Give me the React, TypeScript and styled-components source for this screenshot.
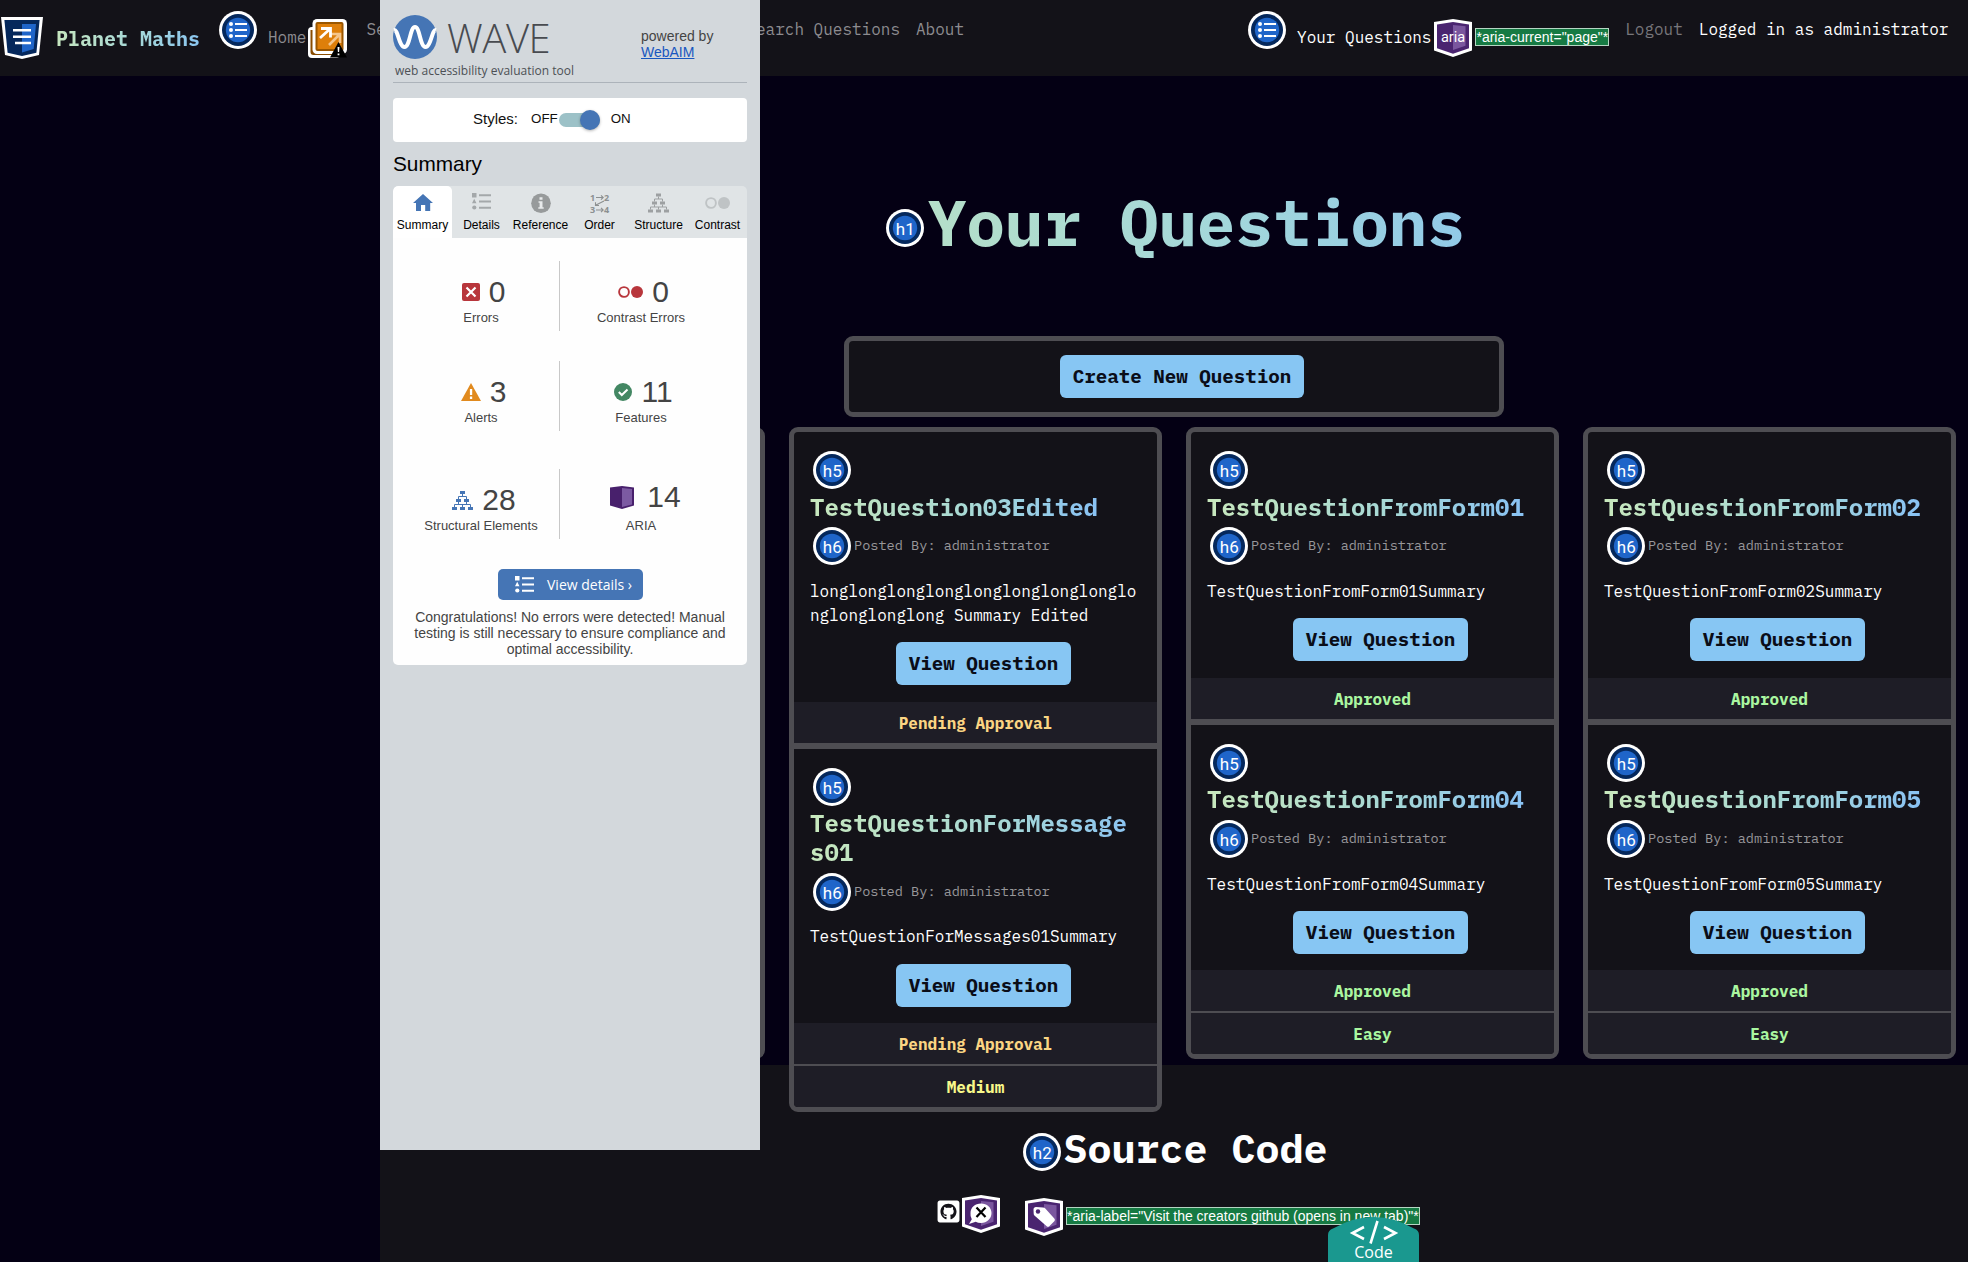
import React from 'react';
import styled, { createGlobalStyle } from 'styled-components';
import { FaGithubSquare } from 'react-icons/fa';

const mono = '"IBM Plex Mono", "Liberation Mono", monospace';
const sans = '"Liberation Sans", Arial, sans-serif';
const open = '"Open Sans", "Noto Sans", sans-serif';
const surface = '#131218';
const line = '#4e4d52';

const Global = createGlobalStyle`
  *, *::before, *::after { box-sizing: border-box; }
  body { margin: 0; background: #040014; font-family: ${mono}; font-size: 16px; line-height: 24px; color: #fff; }
  h1, h2, h5, h6, p { margin: 0; }
  svg { display: block; flex: none; }
`;

const Page = styled.div`
  position: relative;
  width: 1968px;
  height: 1262px;
  overflow: hidden;
`;

/* ---------- site header ---------- */
const Header = styled.header`
  display: flex;
  align-items: flex-start;
  height: 76px;
  padding: 0 19.6px 0 1px;
  background: ${surface};
`;
const Brand = styled.span`
  margin: 27px 19px 0 13px;
  font-size: 20px;
  font-weight: 700;
  background: linear-gradient(90deg, #c6e6bf, #a3d6da 60%, #8ac5f0);
  background-clip: text;
  color: transparent;
`;
const NavText = styled.span<{ $top?: number; $tone?: string; $gap?: number; $width?: number }>`
  margin-top: ${p => p.$top ?? 17}px;
  margin-left: ${p => p.$gap ?? 16}px;
  width: ${p => (p.$width ? `${p.$width}px` : 'auto')};
  color: ${p => p.$tone ?? '#8d8c90'};
  white-space: nowrap;
`;
const IconSlot = styled.span<{ $top: number; $gap?: number }>`
  margin-top: ${p => p.$top}px;
  margin-left: ${p => p.$gap ?? 0}px;
`;
const NavRight = styled.div`
  display: flex;
  align-items: flex-start;
  margin-left: auto;
`;
const AttrTag = styled.span<{ $top?: number; $gap?: number }>`
  height: 18px;
  margin-top: ${p => p.$top ?? 0}px;
  margin-left: ${p => p.$gap ?? 3}px;
  border: 1px solid #b5d6c3;
  background: #167a43;
  color: #fff;
  font: 14px/16px ${sans};
  white-space: nowrap;
`;

/* ---------- main ---------- */
const Main = styled.main`
  height: 989px;
  margin-left: 380px;
  padding: 113px 12px 0;
`;
const TitleRow = styled.div`
  display: flex;
  align-items: center;
  height: 77px;
  padding-left: 494px;
  gap: 4px;
`;
const Title = styled.h1`
  margin-bottom: 10px;
  font-size: 64px;
  line-height: 77px;
  background: linear-gradient(90deg, #b5dfc9, #a5d8d9 50%, #92cae8);
  background-clip: text;
  color: transparent;
`;
const CreateBox = styled.section`
  width: 660px;
  height: 81px;
  margin: 70px auto 10px;
  padding: 14px 0 0 16px;
  display: flex;
  justify-content: center;
  align-items: flex-start;
  border: 5px solid ${line};
  border-radius: 9px;
  background: ${surface};
`;
const Button = styled.button`
  height: 43px;
  padding: 0 12.5px 2px;
  border: 0;
  border-radius: 6px;
  background: #87c6f3;
  color: #0a0d18;
  font: 700 19.2px/41px ${mono};
  white-space: nowrap;
`;
const Columns = styled.div`
  display: grid;
  grid-template-columns: repeat(4, 373px);
  gap: 24px;
  align-items: start;
`;
const Column = styled.div<{ $minHeight?: number }>`
  min-height: ${p => p.$minHeight ?? 0}px;
  border: 5px solid ${line};
  border-radius: 9px;
  background: ${line};
  overflow: hidden;
`;
const Card = styled.article`
  background: ${surface};
  & + & { margin-top: 6px; }
`;
const CardBody = styled.div`
  padding: 19px 16px 16.2px;
`;
const CardTitle = styled.h5`
  width: fit-content;
  margin: 3.7px 0 5.8px;
  font-size: 24px;
  line-height: 28.8px;
  overflow-wrap: anywhere;
  background: linear-gradient(90deg, #c8e8bd, #a6d8d6 58%, #89c2f4);
  background-clip: text;
  color: transparent;
`;
const BadgeSlot = styled.div`
  padding-left: 3px;
`;
const Posted = styled.h6`
  display: flex;
  align-items: center;
  gap: 3px;
  padding-left: 3px;
  font-size: 13.6px;
  font-weight: 400;
  line-height: 20px;
  color: #98979a;
`;
const PostedText = styled.span`
  margin-bottom: 2px;
`;
const Summary = styled.p`
  margin: 13.6px 0 15.6px;
  overflow-wrap: anywhere;
`;
const Action = styled.div`
  display: flex;
  justify-content: center;
  padding-left: 16px;
`;
const Status = styled.div<{ $tone: string }>`
  height: 41px;
  line-height: 42px;
  text-align: center;
  font-weight: 700;
  color: ${p => p.$tone};
  background: #1e1d26;
  & + & { height: 43px; border-top: 2px solid ${line}; }
`;

/* ---------- footer ---------- */
const Footer = styled.footer`
  height: 197px;
  margin-left: 380px;
  padding-top: 63px;
  background: ${surface};
`;
const FooterTitle = styled.h2`
  display: flex;
  justify-content: center;
  align-items: center;
  gap: 3px;
  height: 48px;
  padding-left: 2px;
  font-size: 40px;
  line-height: 48px;
`;
const FooterTitleText = styled.span`
  margin-bottom: 9px;
`;
const FooterLinks = styled.div`
  display: flex;
  align-items: flex-start;
  margin-top: 19px;
  padding-left: 556px;
`;
const CodeTab = styled.div`
  position: absolute;
  left: 1328px;
  top: 1217px;
  width: 91px;
  height: 45px;
`;
const CodeLabel = styled.span`
  position: absolute;
  left: 0;
  right: 0;
  top: 24px;
  text-align: center;
  font: 16px/22px ${open};
`;

/* ---------- evaluation panel ---------- */
const Panel = styled.aside`
  position: absolute;
  left: 380px;
  top: 0;
  width: 380px;
  height: 1150px;
  padding: 15px 13px 0;
  background: #d3d8dc;
  color: #444;
  font-family: ${sans};
`;
const PanelHead = styled.div`
  display: flex;
  height: 68px;
  border-bottom: 1px solid #acb3ba;
`;
const LogoBlock = styled.div`
  width: 248px;
`;
const LogoRow = styled.div`
  display: flex;
  gap: 10px;
  height: 44px;
`;
const Word = styled.span`
  font: 300 40px/45px ${open};
  letter-spacing: -0.4px;
  color: #484b50;
`;
const Tagline = styled.div`
  padding-left: 2px;
  font: 12px/16px ${open};
  white-space: nowrap;
  color: #4c5055;
  margin-top: 4px;
`;
const Powered = styled.div`
  padding-top: 13px;
  font-size: 14px;
  line-height: 16px;
`;
const WebLink = styled.a`
  display: block;
  color: #1857c0;
  text-decoration: underline;
`;
const StylesBox = styled.div`
  display: flex;
  align-items: center;
  height: 44px;
  margin-top: 15px;
  padding: 0 0 2px 80px;
  border-radius: 4px;
  background: #fff;
  color: #111;
  font-size: 15px;
`;
const Small = styled.span<{ $left: number }>`
  margin-left: ${p => p.$left}px;
  font-size: 13.33px;
`;
const Toggle = styled.span`
  display: flex;
  justify-content: flex-end;
  align-items: center;
  width: 41px;
  height: 14px;
  margin: 2px 0 0 1px;
  border-radius: 7px;
  background: #9cc1c7;
`;
const Knob = styled.span`
  width: 20px;
  height: 20px;
  border-radius: 50%;
  background: #4575b5;
  box-shadow: 0 1px 3px rgba(0, 0, 0, 0.3);
`;
const PanelTitle = styled.div`
  margin-top: 9px;
  height: 35px;
  font-size: 20.8px;
  line-height: 26px;
  color: #000;
`;
const Tabs = styled.div`
  display: grid;
  grid-template-columns: repeat(6, 1fr);
  height: 52px;
  border-radius: 5px 5px 0 0;
  background: #e0e4e6;
  overflow: hidden;
`;
const Tab = styled.div<{ $active?: boolean; $tall?: boolean }>`
  display: flex;
  flex-direction: column;
  align-items: center;
  padding-top: 7px;
  border-radius: 5px 5px 0 0;
  background: ${p => (p.$active ? '#fff' : 'transparent')};
  color: #000;
  font-size: 12px;
  line-height: 16px;
  & > svg { margin: ${p => (p.$tall ? '-3px 0 0' : '0 0 4px')}; }
`;
const Results = styled.div`
  height: 427px;
  padding: 23px 8px 0;
  border-radius: 0 0 5px 5px;
  background: #fefefe;
`;
const Pair = styled.div<{ $gap: number }>`
  display: grid;
  grid-template-columns: 159px 162px;
  height: 70px;
  margin-bottom: ${p => p.$gap}px;
`;
const Stat = styled.div<{ $divided?: boolean }>`
  display: flex;
  flex-direction: column;
  align-items: center;
  padding: 14px 0 0 ${p => (p.$divided ? 2 : 0)}px;
  border-right: ${p => (p.$divided ? '1px solid #c8c8c8' : '0')};
  font-size: 13px;
  line-height: 16px;
  white-space: nowrap;
`;
const Count = styled.div<{ $gap?: number; $lift?: number; $shift?: number }>`
  display: flex;
  align-items: center;
  gap: ${p => p.$gap ?? 9}px;
  height: 34px;
  margin-bottom: ${p => 1 + (p.$lift ?? 0)}px;
  margin-top: ${p => -(p.$lift ?? 0)}px;
  padding-left: ${p => p.$shift ?? 0}px;
  font-size: 30px;
`;
const DetailsButton = styled.div`
  display: flex;
  align-items: center;
  gap: 13px;
  width: 145px;
  height: 31px;
  margin: 0 0 9px 97px;
  padding-left: 17px;
  border-radius: 5px;
  background: #4575b5;
  color: #fff;
  font: 14px/30px ${open};
  white-space: nowrap;
`;
const Message = styled.p`
  text-align: center;
  font-size: 14px;
  line-height: 16px;
`;

/* ---------- drawings ---------- */
const Heading = ({ label }: { label: string }) => (
  <svg width="38" height="38" viewBox="0 0 38 38">
    <circle cx="19" cy="19" r="19" fill="#fff" />
    <circle cx="19" cy="19" r="16" fill="#05285c" />
    <circle cx="19" cy="19" r="12.2" fill="#1f65c9" />
    <text x="19.3" y="25.6" textAnchor="middle" fontFamily="Roboto, sans-serif" fontSize="17" fontWeight="400" fill="#fff">{label}</text>
  </svg>
);

const ListBadge = () => (
  <svg width="38" height="38" viewBox="0 0 38 38">
    <circle cx="19" cy="19" r="19" fill="#fff" />
    <circle cx="19" cy="19" r="16" fill="#05285c" />
    <circle cx="19" cy="19" r="12.2" fill="#1f65c9" />
    <g fill="#fff">
      <circle cx="12" cy="13" r="2" /><circle cx="12" cy="19" r="2" /><circle cx="12" cy="25" r="2" />
      <path d="M16 12h12v2H16zM16 18h12v2H16zM16 24h12v2H16z" />
    </g>
  </svg>
);

const Shield = () => (
  <svg width="42" height="42" viewBox="0 0 42 42">
    <path d="M0 0h42l-4 38-17 4-17-4z" fill="#fff" />
    <path d="M3.4 3h35.2l-3.2 32.8L21 39 6.600 35.800z" fill="#05285c" />
    <path d="M21 7h14l-2.300 25L21 35.500z" fill="#1f65c9" />
    <path d="M12 13.300h18M12 19.700h18M14 26h16" stroke="#fff" strokeWidth="2.600" />
  </svg>
);

const RedirectIcon = () => (
  <svg width="39" height="39" viewBox="0 0 39 39">
    <rect x="0" y="8" width="32" height="31" rx="4" fill="#fff" />
    <path d="M2.500 11v22a3 3 0 0 0 3 3h22v-3H8a2 2 0 0 1-2-2V11z" fill="#8a4c00" />
    <rect x="4.500" y="0" width="34.500" height="35" rx="4.500" fill="#fff" />
    <rect x="7.500" y="3" width="28" height="29" rx="2" fill="#9a5600" />
    <rect x="9.500" y="5" width="24" height="25" fill="#de7f0a" />
    <path d="M21 26l10.500-10.500M23 15h9v9" stroke="#f4c58c" strokeWidth="2.600" fill="none" />
    <path d="M12 19l10.500-9.500M13 9.500h9.500v9" stroke="#fff" strokeWidth="2.800" fill="none" />
    <path d="M30.500 23l8.500 15.500H22z" fill="#000" />
    <path d="M29.500 28h2l-.4 5h-1.200zM29.600 34.500h1.800v1.800h-1.800z" fill="#fff" />
  </svg>
);

const AriaHex = ({ children }: { children?: React.ReactNode }) => (
  <svg width="38" height="38" viewBox="0 0 38 38">
    <path d="M0 3L19 0l19 3v28.500L19 38 0 31.500z" fill="#fff" />
    <path d="M3 5.600L19 3l16 2.600v23.700L19 34.800 3 29.300z" fill="#4a2470" />
    <path d="M19 6l12.500 1.200v19.500L19 31z" fill="#7a569e" />
    {children}
  </svg>
);

const StructureIcon = ({ color, w, h }: { color: string; w: number; h: number }) => (
  <svg width={w} height={h} viewBox="0 0 21 19" fill={color}>
    <path d="M8 0h5v3H8zM4 8h5v3H4zM12 8h5v3h-5zM0 16h5v3H0zM8 16h5v3H8zM16 16h5v3h-5z" />
    <path d="M10.500 3v2.500M6.500 8V5.500h8V8M6.500 11v2.500M14.500 11v2.500M2.500 16v-2.500h16V16M10.500 13.500V16" fill="none" stroke={color} strokeWidth="1" />
  </svg>
);

const ListIcon = ({ color }: { color: string }) => (
  <svg width="19" height="17" viewBox="0 0 19 17" fill={color}>
    <path d="M0 0h4.500v4.500H0zM2.200 5.700l2.300 4.500H0z" /><circle cx="2.300" cy="14.500" r="2.100" />
    <path d="M7 1.200h12v2H7zM7 7.500h12v2H7zM7 13.700h12v2H7z" />
  </svg>
);

const Circles = ({ color, big }: { color: string; big?: boolean }) => (
  <svg width="25" height={big ? 20 : 18} viewBox={big ? '0 0 25 20' : '0 0 25 18'}>
    <circle cx="6" cy={big ? 10 : 9} r="4.900" fill="none" stroke={color} strokeWidth="1.900" />
    <circle cx="19" cy={big ? 10 : 9} r="6" fill={color} />
  </svg>
);

const WaveLogo = () => (
  <svg width="44" height="44" viewBox="0 0 44 44">
    <circle cx="22" cy="22" r="22" fill="#4575b5" />
    <path d="M1 15C5 14 6 32 11.500 32S17 12 22 12s5 20 10.500 20S39 14 43 15" fill="none" stroke="#fff" strokeWidth="4" />
  </svg>
);

/* ---------- content ---------- */
const tones: Record<string, string> = {
  'Pending Approval': '#fbd583',
  Approved: '#aaf7a0',
  Easy: '#aaf7a0',
  Medium: '#f8f88a',
};
type Question = { title: string; summary: string; status: string[] };
const columns: Question[][] = [
  [
    { title: 'TestQuestion03Edited', summary: 'longlonglonglonglonglonglonglonglonglonglonglong Summary Edited', status: ['Pending Approval'] },
    { title: 'TestQuestionForMessages01', summary: 'TestQuestionForMessages01Summary', status: ['Pending Approval', 'Medium'] },
  ],
  [
    { title: 'TestQuestionFromForm01', summary: 'TestQuestionFromForm01Summary', status: ['Approved'] },
    { title: 'TestQuestionFromForm04', summary: 'TestQuestionFromForm04Summary', status: ['Approved', 'Easy'] },
  ],
  [
    { title: 'TestQuestionFromForm02', summary: 'TestQuestionFromForm02Summary', status: ['Approved'] },
    { title: 'TestQuestionFromForm05', summary: 'TestQuestionFromForm05Summary', status: ['Approved', 'Easy'] },
  ],
];

const QuestionCard = ({ q }: { q: Question }) => (
  <Card>
    <CardBody>
      <BadgeSlot><Heading label="h5" /></BadgeSlot>
      <CardTitle>{q.title}</CardTitle>
      <Posted><Heading label="h6" /><PostedText>Posted By: administrator</PostedText></Posted>
      <Summary>{q.summary}</Summary>
      <Action><Button>View Question</Button></Action>
    </CardBody>
    {q.status.map(s => <Status key={s} $tone={tones[s]}>{s}</Status>)}
  </Card>
);

const WavePanel = () => (
  <Panel>
    <PanelHead>
      <LogoBlock>
        <LogoRow><WaveLogo /><Word>WAVE</Word></LogoRow>
        <Tagline>web accessibility evaluation tool</Tagline>
      </LogoBlock>
      <Powered>powered by<WebLink>WebAIM</WebLink></Powered>
    </PanelHead>
    <StylesBox>
      Styles:
      <Small $left={13}>OFF</Small>
      <Toggle><Knob /></Toggle>
      <Small $left={11}>ON</Small>
    </StylesBox>
    <PanelTitle>Summary</PanelTitle>
    <Tabs>
      <Tab $active>
        <svg width="20" height="20" viewBox="0 0 20 20"><path d="M10 1l10 9h-2.800v8h-5v-6H8v6H3v-8H0z" fill="#4575b5" /></svg>
        Summary
      </Tab>
      <Tab>
        <svg width="19" height="20" viewBox="0 0 19 20"><ListIcon color="#a4a8aa" /></svg>
        Details
      </Tab>
      <Tab>
        <svg width="20" height="20" viewBox="0 0 20 20">
          <circle cx="10" cy="10.200" r="9.800" fill="#979a9b" />
          <path d="M8.500 4.200h3v2.600h-3zM7.500 8.200h4v6h1.200v1.600H7.300v-1.600h1.300V9.800H7.500z" fill="#e8eaeb" />
        </svg>
        Reference
      </Tab>
      <Tab $tall>
        <svg width="24" height="27" viewBox="-2 -3 24 27" fill="#8c9091">
          <text x="0" y="7.500" fontFamily="Open Sans, sans-serif" fontWeight="700" fontSize="9">1</text>
          <text x="14" y="7.500" fontFamily="Open Sans, sans-serif" fontWeight="700" fontSize="9">2</text>
          <text x="0" y="20" fontFamily="Open Sans, sans-serif" fontWeight="700" fontSize="9">3</text>
          <text x="14" y="20" fontFamily="Open Sans, sans-serif" fontWeight="700" fontSize="9">4</text>
          <path d="M6 4.500h7M11 2.300l2.200 2.200L11 6.700M6 17h7M11 14.800l2.200 2.200-2.200 2.200M14 8l-9 4.500M5.500 9.300v3.200H9" stroke="#8c9091" strokeWidth="1.100" fill="none" />
        </svg>
        Order
      </Tab>
      <Tab><StructureIcon color="#9da0a2" w={21} h={20} />Structure</Tab>
      <Tab><Circles color="#bfc3c5" big />Contrast</Tab>
    </Tabs>
    <Results>
      <Pair $gap={30}>
        <Stat $divided>
          <Count $shift={5}>
            <svg width="18" height="18" viewBox="0 0 18 18"><rect width="18" height="18" rx="2" fill="#b8363c" /><path d="M4.500 4.500l9 9M13.500 4.500l-9 9" stroke="#fff" strokeWidth="2.200" /></svg>
            0
          </Count>
          Errors
        </Stat>
        <Stat><Count $shift={5}><Circles color="#b8363c" />0</Count>Contrast Errors</Stat>
      </Pair>
      <Pair $gap={38}>
        <Stat $divided>
          <Count $shift={5}>
            <svg width="20" height="18" viewBox="0 0 20 18"><path d="M10 0l10 18H0z" fill="#e18a1e" /><path d="M8.900 6h2.300v6H8.900zM8.900 13.600h2.300v2.300H8.900z" fill="#fff" /></svg>
            3
          </Count>
          Alerts
        </Stat>
        <Stat>
          <Count $shift={5}>
            <svg width="18" height="18" viewBox="0 0 18 18"><circle cx="9" cy="9" r="9" fill="#438763" /><path d="M4.800 9l3 3L13.500 6.500" stroke="#fff" strokeWidth="2" fill="none" /></svg>
            11
          </Count>
          Features
        </Stat>
      </Pair>
      <Pair $gap={30}>
        <Stat $divided><Count $shift={6}><StructureIcon color="#4575b5" w={21} h={19} />28</Count>Structural Elements</Stat>
        <Stat>
          <Count $gap={13} $lift={3} $shift={9}>
            <svg width="24" height="23" viewBox="0 0 24 23"><path d="M0 1.500L12 0l12 1.500v18L12 23 0 19.500z" fill="#48206c" /><path d="M12 2l10 1v15.500L12 21z" fill="#7c5aa2" /></svg>
            14
          </Count>
          ARIA
        </Stat>
      </Pair>
      <DetailsButton><ListIcon color="#fff" />View details ›</DetailsButton>
      <Message>Congratulations! No errors were detected! Manual testing is still necessary to ensure compliance and optimal accessibility.</Message>
    </Results>
  </Panel>
);

export default function App() {
  return (
    <Page>
      <Global />
      <Header>
        <IconSlot $top={17}><Shield /></IconSlot>
        <Brand>Planet Maths</Brand>
        <IconSlot $top={11}><ListBadge /></IconSlot>
        <NavText $top={25} $gap={11}>Home</NavText>
        <IconSlot $top={19} $gap={2}><RedirectIcon /></IconSlot>
        <NavText $gap={19} $width={364}>Se</NavText>
        <NavText>Search Questions</NavText>
        <NavText>About</NavText>
        <NavRight>
          <IconSlot $top={11}><ListBadge /></IconSlot>
          <NavText $top={25} $gap={11} $tone="#fff">Your Questions</NavText>
          <IconSlot $top={19} $gap={3}>
            <AriaHex><text x="19" y="23" textAnchor="middle" fontFamily="Roboto, sans-serif" fontSize="14.500" fill="#fff">aria</text></AriaHex>
          </IconSlot>
          <AttrTag $top={28}>*aria-current="page"*</AttrTag>
          <NavText $tone="#77767b">Logout</NavText>
          <NavText $tone="#fff">Logged in as administrator</NavText>
        </NavRight>
      </Header>

      <Main>
        <TitleRow><Heading label="h1" /><Title>Your Questions</Title></TitleRow>
        <CreateBox><Button>Create New Question</Button></CreateBox>
        <Columns>
          <Column $minHeight={632} />
          {columns.map((items, i) => (
            <Column key={i}>{items.map(q => <QuestionCard key={q.title} q={q} />)}</Column>
          ))}
        </Columns>
      </Main>

      <Footer>
        <FooterTitle><Heading label="h2" /><FooterTitleText>Source Code</FooterTitleText></FooterTitle>
        <FooterLinks>
          <IconSlot $top={4}><FaGithubSquare size={25} color="#fff" /></IconSlot>
          <IconSlot $top={0} $gap={1}>
            <AriaHex>
              <path d="M19 8.500c6 0 10.500 4 10.500 9.500S25 28 19 28c-2 0-3.800-.4-5.300-1.200L7 29l2.800-4.800A9.500 9.500 0 0 1 8.500 18C8.500 12.500 13 8.500 19 8.500z" fill="#fff" />
              <path d="M14.500 12.500l9 9.500M23.500 12.500l-9 9.500" stroke="#000" strokeWidth="2.200" />
            </AriaHex>
          </IconSlot>
          <IconSlot $top={3} $gap={25}>
            <AriaHex>
              <path d="M8.500 11.500c0-1.500 1-2.500 2.500-2.500l7 .5c1 .1 1.700.4 2.300 1.100l9 10c.8 1 .8 1.800 0 2.600l-5 5c-.8.800-1.800.8-2.600 0l-12-10.500c-.7-.7-1-1.300-1-2.300z" fill="#fff" />
              <circle cx="13" cy="13.500" r="2.200" fill="#4a2470" />
            </AriaHex>
          </IconSlot>
          <AttrTag $top={12}>*aria-label="Visit the creators github (opens in new tab)"*</AttrTag>
        </FooterLinks>
      </Footer>

      <WavePanel />

      <CodeTab>
        <svg width="91" height="45" viewBox="0 0 91 45">
          <path d="M0 45V18q0-5 5-6.500Q25 0 45.500 0T86 11.500q5 1.500 5 6.500v27z" fill="#1a988f" />
          <path d="M36 10L24.500 16 36 22M56 10l11.500 6L56 22M49.500 4L42.500 26.500" fill="none" stroke="#fff" strokeWidth="2.600" />
        </svg>
        <CodeLabel>Code</CodeLabel>
      </CodeTab>
    </Page>
  );
}
